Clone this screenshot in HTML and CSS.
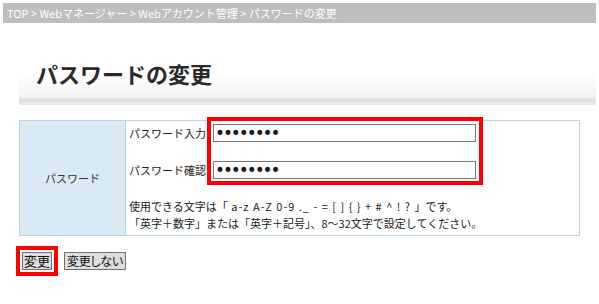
FILE: index.html
```html
<!DOCTYPE html>
<html lang="ja">
<head>
<meta charset="utf-8">
<title>パスワードの変更</title>
<link rel="stylesheet" href="styles.css">
</head>
<body>
<div class="crumbs">TOP &gt; Webマネージャー &gt; Webアカウント管理 &gt; パスワードの変更</div>
<div class="head"><h1 class="title">パスワードの変更</h1></div>
<div class="form">
  <div class="label">パスワード</div>
  <div class="field">
    <div class="row"><span class="lab">パスワード入力</span><input class="pw" type="password" value="abcdefgh"></div>
    <div class="row row2"><span class="lab">パスワード確認</span><input class="pw" type="password" value="abcdefgh"></div>
    <p class="note">使用できる文字は「<span class="chars"> a-z A-Z 0-9 ._ - = [ ] { } + # ^ ! ? </span>」です。<br>「英字＋数字」または「英字＋記号」、8〜32文字で設定してください。</p>
    <div class="mark mark-inputs"></div>
  </div>
</div>
<div class="actions">
  <span class="markbox"><button class="btn btn-ok">変更</button></span>
  <button class="btn btn-no">変更しない</button>
</div>
</body>
</html>
```
FILE: styles.css
```css
html, body { margin: 0; padding: 0; background: #fff; }
body {
  padding: 3px;
  font-family: "Noto Sans CJK JP", "Noto Sans", sans-serif;
  font-size: 11px;
  color: #222;
  width: 593px;
}
.crumbs {
  height: 20px;
  line-height: 20px;
  background: #bebebe;
  color: #fff;
  font-size: 11px;
  padding-left: 4px;
  white-space: nowrap;
  overflow: hidden;
}
.head {
  margin: 27px 0 0 16px;
  width: 577px;
  height: 55px;
  box-sizing: border-box;
  padding: 8px 0 0 17px;
  background: linear-gradient(to bottom, #fff 0, #fff 22px, #f3f3f3 48px, #dcdcdc 49px, #e4e4e4 52px, #ececec 55px);
}
.title {
  margin: 0;
  font-size: 22px;
  line-height: 30px;
  font-weight: bold;
  color: #2a2a2a;
}
.form {
  margin: 15px 0 0 16px;
  width: 561px;
  box-sizing: border-box;
  border: 1px solid #b7d4e6;
  display: grid;
  grid-template-columns: 106px 1fr;
}
.label {
  background: #d9eaf5;
  border-right: 1px solid #b7d4e6;
  display: flex;
  align-items: center;
  justify-content: center;
  color: #333;
}
.field {
  position: relative;
  padding: 3px 0 3px 3px;
}
.row {
  display: flex;
  align-items: center;
  height: 18px;
}
.row2 { margin-top: 19px; }
.lab {
  width: 84px;
  white-space: nowrap;
  color: #222;
}
.pw {
  width: 263px;
  height: 18px;
  box-sizing: border-box;
  border: 1px solid #777;
  padding: 0 0 0 1px;
  margin: 0;
  font-family: "DejaVu Sans", sans-serif;
  font-size: 17px;
  letter-spacing: -2.1px;
  color: #1c1c1c;
  background: #fff;
  outline: none;
}
.note {
  margin: 19px 0 0 0;
  line-height: 17px;
  font-size: 11px;
  color: #222;
}
.chars {
  letter-spacing: 1px;
  white-space: pre;
}
.mark {
  position: absolute;
  border: 4px solid #f00;
  box-sizing: border-box;
}
.mark-inputs {
  left: 81px;
  top: -4px;
  width: 276px;
  height: 68px;
}
.actions {
  margin: 10px 0 0 13px;
  display: flex;
  align-items: center;
  gap: 6px;
}
.markbox {
  border: 4px solid #f00;
  padding: 2px;
  display: flex;
}
.btn {
  margin: 0;
  height: 18px;
  padding: 0;
  border: 1px solid #707070;
  background: #dedede;
  font-family: "Noto Sans CJK JP", sans-serif;
  font-size: 13px;
  line-height: 16px;
  color: #111;
  white-space: nowrap;
  font-feature-settings: "palt";
  border-radius: 0;
}
.btn-ok { width: 30px; }
.btn-no { width: 62px; font-size: 12px; letter-spacing: -0.3px; }
```
